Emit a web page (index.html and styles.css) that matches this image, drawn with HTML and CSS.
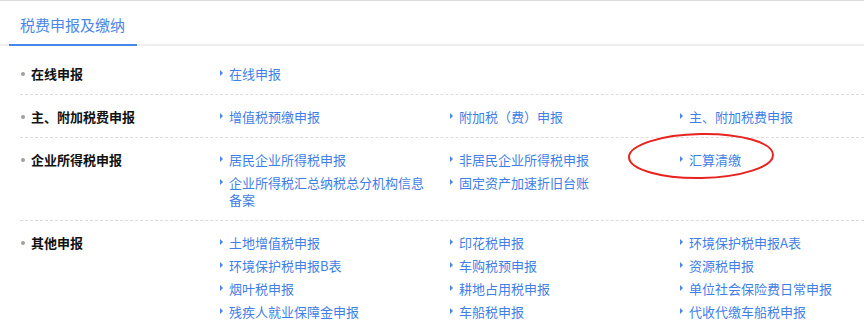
FILE: index.html
```html
<!DOCTYPE html>
<html lang="zh-CN">
<head>
    <meta charset="UTF-8">
    <meta name="viewport" content="width=device-width, initial-scale=1.0">
    <title>税费申报及缴纳</title>
    <link rel="stylesheet" href="styles.css">
</head>
<body>
<div class="panel">
    <div class="panel-head">
        <span class="tab">税费申报及缴纳</span>
    </div>

    <ul class="groups">
        <!-- 在线申报 -->
        <li class="group">
            <div class="group-name">在线申报</div>
            <ul class="links">
                <li><a href="#">在线申报</a></li>
            </ul>
        </li>

        <!-- 主、附加税费申报 -->
        <li class="group">
            <div class="group-name">主、附加税费申报</div>
            <ul class="links">
                <li><a href="#">增值税预缴申报</a></li>
                <li><a href="#">附加税（费）申报</a></li>
                <li><a href="#">主、附加税费申报</a></li>
            </ul>
        </li>

        <!-- 企业所得税申报 -->
        <li class="group">
            <div class="group-name">企业所得税申报</div>
            <ul class="links">
                <li><a href="#">居民企业所得税申报</a></li>
                <li><a href="#">非居民企业所得税申报</a></li>
                <li class="marked">
                    <a href="#">汇算清缴</a>
                    <svg class="circle" width="150" height="50" viewBox="0 0 150 50">
                        <ellipse cx="74" cy="24" rx="72" ry="22" transform="rotate(-1 74 24)"></ellipse>
                    </svg>
                </li>
                <li><a href="#">企业所得税汇总纳税总分机构信息备案</a></li>
                <li><a href="#">固定资产加速折旧台账</a></li>
            </ul>
        </li>

        <!-- 其他申报 -->
        <li class="group">
            <div class="group-name">其他申报</div>
            <ul class="links">
                <li><a href="#">土地增值税申报</a></li>
                <li><a href="#">印花税申报</a></li>
                <li><a href="#">环境保护税申报A表</a></li>
                <li><a href="#">环境保护税申报B表</a></li>
                <li><a href="#">车购税预申报</a></li>
                <li><a href="#">资源税申报</a></li>
                <li><a href="#">烟叶税申报</a></li>
                <li><a href="#">耕地占用税申报</a></li>
                <li><a href="#">单位社会保险费日常申报</a></li>
                <li><a href="#">残疾人就业保障金申报</a></li>
                <li><a href="#">车船税申报</a></li>
                <li><a href="#">代收代缴车船税申报</a></li>
            </ul>
        </li>
    </ul>
</div>
</body>
</html>
```

FILE: styles.css
```css
body {
    margin: 0;
    padding: 0;
    background: #fff;
    font-family: "Noto Sans CJK SC", "Noto Sans", sans-serif;
    overflow: hidden;
}
ul {
    list-style: none;
    margin: 0;
    padding: 0;
}
a {
    text-decoration: none;
}
.panel {
    border-top: 1px solid #dddddd;
}
.panel-head {
    height: 43px;
    border-bottom: 2px solid #eeeeee;
}
.tab {
    display: inline-block;
    margin-left: 9px;
    padding: 4px 12px 0 11px;
    height: 39px;
    line-height: 39px;
    font-size: 15px;
    color: #4a86e8;
    border-bottom: 2px solid #4a86e8;
}
.groups {
    padding-top: 6px;
}
.group {
    display: flex;
    margin-left: 20px;
    padding: 10px 0 9px;
    border-bottom: 1px dashed #dcdcdc;
}
.group-name {
    position: relative;
    flex: none;
    width: 189px;
    padding: 3px 0 0 11px;
    line-height: 17px;
    font-size: 13px;
    font-weight: bold;
    color: #111;
}
.group-name::before {
    content: "";
    position: absolute;
    left: 1px;
    top: 10px;
    width: 4px;
    height: 4px;
    border-radius: 50%;
    background: #a0a0a0;
}
.links {
    flex: 1;
    display: grid;
    grid-template-columns: 230px 230px 1fr;
    row-gap: 6px;
    padding: 3px 0 3px;
}
.links li {
    position: relative;
    padding: 0 25px 0 9px;
    line-height: 17px;
    font-size: 13px;
}
.links li::before {
    content: "";
    position: absolute;
    left: 0;
    top: 5px;
    border-left: 3px solid #4a86e8;
    border-top: 3px solid transparent;
    border-bottom: 3px solid transparent;
}
.links a {
    color: #3f7fe6;
}
.circle {
    position: absolute;
    left: -53px;
    top: -19px;
    pointer-events: none;
}
.circle ellipse {
    fill: none;
    stroke: #e8221e;
    stroke-width: 2;
}
```
